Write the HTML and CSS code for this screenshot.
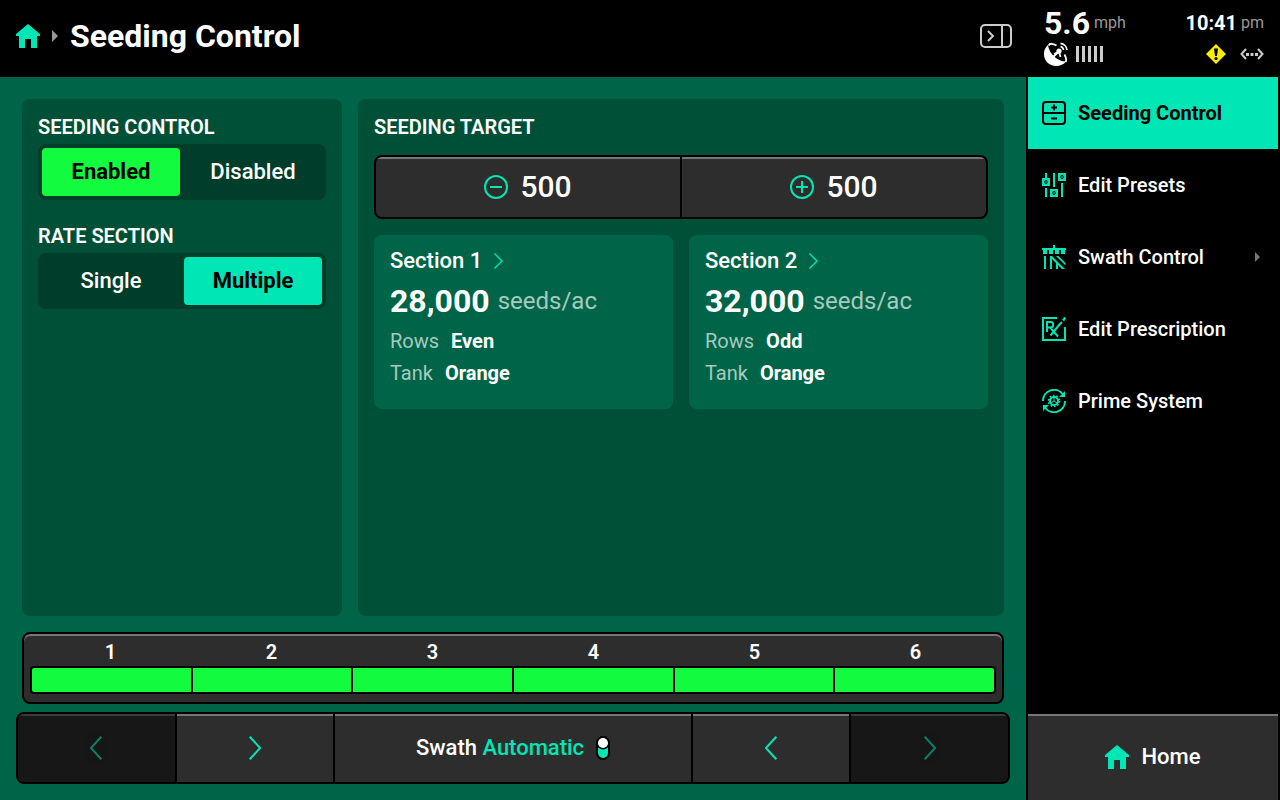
FILE: index.html
```html
<!DOCTYPE html>
<html lang="en">
<head>
    <meta charset="UTF-8">
    <meta name="viewport" content="width=device-width, initial-scale=1.0">
    <title>Seeding Control</title>
    <link rel="stylesheet" href="styles.css">
</head>
<body>
    <div class="app">
        <div class="page">
            <header class="header">
                <a href="#" class="home_link" aria-label="Home">
                    <svg class="icon" viewBox="0 0 24 24"><path fill="currentColor" d="M12 0 24 10v2h-3v12h-6v-9H9v9H3V12H0v-2z"/></svg>
                </a>
                <svg class="crumb_arrow" viewBox="0 0 6 12"><path fill="currentColor" d="M0 0 6 6 0 12z"/></svg>
                <h1>Seeding Control</h1>
                <button class="collapse_btn" type="button" aria-label="Collapse menu">
                    <svg viewBox="0 0 32 24" fill="none" stroke="currentColor" stroke-width="2">
                        <rect x="1" y="1" width="30" height="22" rx="4"/>
                        <path d="M22 1v22M8 7l5 5-5 5"/>
                    </svg>
                </button>
            </header>

            <main class="content">
                <div class="panels">
                    <section class="panel settings">
                        <fieldset>
                            <legend>SEEDING CONTROL</legend>
                            <div class="segment">
                                <label class="green"><input type="radio" name="seeding" checked><span>Enabled</span></label>
                                <label><input type="radio" name="seeding"><span>Disabled</span></label>
                            </div>
                        </fieldset>
                        <fieldset>
                            <legend>RATE SECTION</legend>
                            <div class="segment">
                                <label><input type="radio" name="rate"><span>Single</span></label>
                                <label><input type="radio" name="rate" checked><span>Multiple</span></label>
                            </div>
                        </fieldset>
                    </section>

                    <section class="panel target">
                        <h2>SEEDING TARGET</h2>
                        <div class="stepper">
                            <button type="button">
                                <svg class="icon" viewBox="0 0 24 24" fill="none" stroke="currentColor" stroke-width="2"><circle cx="12" cy="12" r="11"/><path d="M6 12h12"/></svg>
                                <span>500</span>
                            </button>
                            <button type="button">
                                <svg class="icon" viewBox="0 0 24 24" fill="none" stroke="currentColor" stroke-width="2"><circle cx="12" cy="12" r="11"/><path d="M6 12h12M12 6v12"/></svg>
                                <span>500</span>
                            </button>
                        </div>
                        <div class="cards">
                            <article class="card">
                                <a href="#" class="card_title">Section 1
                                    <svg viewBox="0 0 9 16" fill="none" stroke="currentColor" stroke-width="1.4"><path d="M.5.5 8 8 .5 15.5"/></svg>
                                </a>
                                <p class="rate"><strong>28,000</strong> seeds/ac</p>
                                <dl>
                                    <div><dt>Rows</dt><dd>Even</dd></div>
                                    <div><dt>Tank</dt><dd>Orange</dd></div>
                                </dl>
                            </article>
                            <article class="card">
                                <a href="#" class="card_title">Section 2
                                    <svg viewBox="0 0 9 16" fill="none" stroke="currentColor" stroke-width="1.4"><path d="M.5.5 8 8 .5 15.5"/></svg>
                                </a>
                                <p class="rate"><strong>32,000</strong> seeds/ac</p>
                                <dl>
                                    <div><dt>Rows</dt><dd>Odd</dd></div>
                                    <div><dt>Tank</dt><dd>Orange</dd></div>
                                </dl>
                            </article>
                        </div>
                    </section>
                </div>

                <div class="swaths">
                    <div class="swath_labels">
                        <span>1</span><span>2</span><span>3</span><span>4</span><span>5</span><span>6</span>
                    </div>
                    <div class="swath_bar">
                        <i></i><i></i><i></i><i></i><i></i><i></i>
                    </div>
                </div>

                <div class="swath_nav">
                    <button type="button" disabled aria-label="Left edge out"><svg viewBox="0 0 12 24"><path d="M11.3.7.9 12l10.4 11.3"/></svg></button>
                    <button type="button" aria-label="Left edge in"><svg viewBox="0 0 12 24"><path d="M.7.7 11.1 12 .7 23.3"/></svg></button>
                    <button type="button" class="swath_mode">
                        <span>Swath <em>Automatic</em></span>
                        <svg class="switch" viewBox="0 0 14 24">
                            <rect width="14" height="24" rx="7" fill="#000"/>
                            <rect x="2" y="6" width="10" height="16" rx="5" fill="#00e6b4"/>
                            <circle cx="7" cy="7" r="6.5" fill="#000"/>
                            <circle cx="7" cy="7" r="5" fill="#fff"/>
                        </svg>
                    </button>
                    <button type="button" aria-label="Right edge in"><svg viewBox="0 0 12 24"><path d="M11.3.7.9 12l10.4 11.3"/></svg></button>
                    <button type="button" disabled aria-label="Right edge out"><svg viewBox="0 0 12 24"><path d="M.7.7 11.1 12 .7 23.3"/></svg></button>
                </div>
            </main>
        </div>

        <aside class="sidebar">
            <div class="status">
                <div class="status_row">
                    <div class="speed"><strong>5.6</strong><span>mph</span></div>
                    <div class="clock"><strong>10:41</strong><span>pm</span></div>
                </div>
                <div class="status_row icons">
                    <div class="gps">
                        <svg class="icon" viewBox="0 0 24 24" fill="none">
                            <path fill="#fff" d="M4 3A12 12 0 0 0 0 12.500C0 19 5.500 24 12 24c4.200 0 8-1.600 10-4.500C14 19.500 5 12 4 3z"/>
                            <path stroke="#fff" stroke-width="1.800" d="M4.500 3.500C6 1 9 1.400 12.500 3.500M21.500 20c1.500-2 .300-5-1-7.500M15 9.500l-5 2.500M15 9.500l1.500 5.500M15 9.500 8 16"/>
                            <circle cx="15" cy="9" r="2.600" fill="#fff"/>
                            <path stroke="#fff" stroke-width="1.700" d="M16.500 4.500a4 4 0 0 1 3 3.500M16.500 1.300A7.500 7.500 0 0 1 23 8"/>
                        </svg>
                        <svg class="signal" viewBox="0 0 28 16" fill="#ccc"><path d="M0 0h3v16H0zM6 0h3v16H6zM12 0h3v16h-3zM18 0h3v16h-3zM24 0h3v16h-3z"/></svg>
                    </div>
                    <div class="alerts">
                        <svg class="warning" viewBox="0 0 20 20"><path fill="#ffed00" d="M10 0 20 10 10 20 0 10z"/><path d="M8 4.500h4l-1 7.500H9z"/><circle cx="10" cy="14.500" r="1.600"/></svg>
                        <svg class="link_state" viewBox="0 0 24 12" fill="none" stroke="#ccc" stroke-width="2"><path d="M6 1 1.500 6 6 11M18 1l4.500 5L18 11"/><path fill="#ccc" stroke="none" d="M6 5h3v3H6zM10.500 5h3v3h-3zM15 5h3v3h-3z"/></svg>
                    </div>
                </div>
            </div>

            <nav class="menu">
                <a href="#" class="active">
                    <svg class="icon" viewBox="0 0 24 24" fill="none" stroke="currentColor" stroke-width="2"><rect x="1" y="1" width="22" height="22" rx="3"/><path d="M1 12h22M9 6.500h6M12 3.500v6M9 17.500h6"/></svg>
                    <span>Seeding Control</span>
                </a>
                <a href="#">
                    <svg class="icon" viewBox="0 0 24 24" fill="currentColor">
                        <path d="M3 0h2v5H3zM0 5h8v8H0zM3 15h2v9H3zM11 0h2v14h-2zM8 16h8v8H8zM16 0h8v8h-8zM19 10h2v14h-2z"/>
                        <g fill="none" stroke="#000" stroke-width="1"><ellipse cx="4" cy="9" rx="1.200" ry="1.800"/><ellipse cx="12" cy="20" rx="1.200" ry="1.800"/><ellipse cx="20" cy="4" rx="1.200" ry="1.800"/></g>
                    </svg>
                    <span>Edit Presets</span>
                </a>
                <a href="#">
                    <svg class="icon" viewBox="0 0 24 24" fill="currentColor">
                        <path d="M11 0h2v3h11v2h-1v4h-4V5h-2v4h-4V5h-2v4H7V5H5v4H1V5H0V3h11z"/>
                        <path d="M2 11h2v13H2zM8 11h2v13H8zM10 11l13 13h-3L10 14zM14 15.500l2 2V24h-2zM14 11h2.500l7 7v2.500z"/>
                    </svg>
                    <span>Swath Control</span>
                    <svg class="more" viewBox="0 0 5 10"><path fill="currentColor" d="M0 0 5 5 0 10z"/></svg>
                </a>
                <a href="#">
                    <svg class="icon" viewBox="0 0 24 24" fill="none" stroke="currentColor" stroke-width="2">
                        <path d="M15 1H1v22h22V10"/>
                        <path d="M5 15V5h3.500a2.700 2.700 0 0 1 0 5.400H5M8 10.400l8 9.100"/>
                        <path d="m8.500 18.500 9-11 2.500-2.500"/><path stroke-width="2.500" d="m21 3.500 2.500-3"/>
                    </svg>
                    <span>Edit Prescription</span>
                </a>
                <a href="#">
                    <svg class="icon" viewBox="0 0 24 24" fill="none" stroke="currentColor" stroke-width="2">
                        <path d="M1 12A11 11 0 0 1 21 5.500M23 12A11 11 0 0 1 3 18.500"/>
                        <path fill="currentColor" stroke="none" d="M23 2v6h-6zM1 22v-6h6z"/>
                        <circle cx="12" cy="12" r="4"/>
                        <circle cx="12" cy="12" r="5.400" stroke-width="1.800" stroke-dasharray="1.600 1.793"/>
                        <path stroke-width="1" d="M12 12V8.500M12 12l3 2M12 12l-3 2"/>
                    </svg>
                    <span>Prime System</span>
                </a>
            </nav>

            <button class="home_btn" type="button">
                <svg class="icon" viewBox="0 0 24 24"><path fill="currentColor" d="M12 0 24 10v2h-3v12h-6v-9H9v9H3V12H0v-2z"/></svg>
                <span>Home</span>
            </button>
        </aside>
    </div>
</body>
</html>
```
FILE: styles.css
```css
*{
    box-sizing: border-box;
    margin: 0;
    padding: 0;
}
body{
    font-family: Roboto, "Liberation Sans", sans-serif;
    font-size: 20px;
    font-weight: 500;
    line-height: 24px;
    color: #fff;
    background-color: #000;
}
a{
    color: inherit;
    text-decoration: none;
}
button{
    font: inherit;
    color: inherit;
    border: 0;
    background: none;
    cursor: pointer;
}
svg{
    display: block;
    flex: none;
}
.icon{
    width: 24px;
    height: 24px;
    color: #00e6b4;
}

/* layout */
.app{
    display: grid;
    grid-template-columns: 1fr 254px;
    min-height: 100vh;
}
.page{
    display: flex;
    flex-direction: column;
}
.header{
    display: flex;
    align-items: center;
    height: 77px;
    padding: 0 14px 5px 16px;
}
.crumb_arrow{
    width: 6px;
    height: 12px;
    margin: 0 12px;
    color: #999;
}
.header h1{
    font-size: 32px;
    font-weight: 700;
    line-height: 40px;
}
.collapse_btn{
    margin-left: auto;
    color: #ccc;
}
.collapse_btn svg{
    width: 32px;
    height: 24px;
}
.content{
    flex: 1;
    display: flex;
    flex-direction: column;
    padding: 22px 16px 16px;
    background-color: #006548;
}

/* panels */
.panels{
    flex: 1;
    display: grid;
    grid-template-columns: 320px 1fr;
    gap: 16px;
    margin: 0 6px 16px;
}
.panel{
    padding: 16px;
    border-radius: 8px;
    background-color: #005038;
}
.panel h2,
legend{
    font-size: 20px;
    font-weight: 600;
    line-height: 24px;
}
fieldset{
    border: 0;
    margin-bottom: 24px;
}
.segment{
    display: flex;
    gap: 4px;
    margin-top: 5px;
    padding: 4px;
    border-radius: 8px;
    background-color: #003d2b;
}
.segment label{
    flex: 1;
    cursor: pointer;
}
.segment input{
    position: absolute;
    opacity: 0;
}
.segment span{
    display: block;
    border-radius: 4px;
    font-size: 22px;
    line-height: 48px;
    text-align: center;
}
.segment input:checked + span{
    color: #000;
    font-weight: 700;
    background-color: #00e6b4;
}
.segment .green input:checked + span{
    background-color: #12fb3e;
}

/* stepper and bottom buttons share the raised look */
.stepper,
.swath_nav{
    display: grid;
    gap: 2px;
    border: 2px solid #000;
    border-radius: 8px;
    overflow: hidden;
    background-color: #000;
}
.stepper{
    grid-template-columns: 1fr 1fr;
    margin: 16px 0;
}
.stepper button,
.swath_nav button,
.home_btn{
    display: flex;
    align-items: center;
    justify-content: center;
    gap: 12px;
    background-color: #2d2d2d;
    box-shadow: inset 0 2px #777;
}
.stepper button{
    height: 60px;
    font-size: 30px;
}

/* section cards */
.cards{
    display: grid;
    grid-template-columns: 1fr 1fr;
    gap: 16px;
}
.card{
    padding: 8px 16px 20px;
    border-radius: 8px;
    background-color: #006548;
}
.card_title{
    display: flex;
    align-items: center;
    gap: 12px;
    font-size: 22px;
    line-height: 36px;
}
.card_title svg{
    width: 9px;
    height: 16px;
    color: #00e6b4;
}
.rate{
    display: flex;
    align-items: center;
    gap: 8px;
    margin-bottom: 2px;
    font-size: 24px;
    font-weight: 400;
    line-height: 44px;
    color: #a6cabf;
}
.rate strong{
    font-size: 32px;
    font-weight: 700;
    color: #fff;
}
.card dl div{
    display: flex;
    gap: 12px;
    line-height: 32px;
}
.card dt{
    font-weight: 400;
    color: #a6cabf;
}
.card dd{
    font-weight: 700;
}

/* swath state */
.swaths{
    margin: 0 6px 8px;
    padding: 6px 6px 8px;
    border: 2px solid #000;
    border-radius: 8px;
    background-color: #2d2d2d;
    box-shadow: inset 0 2px #777;
}
.swath_labels,
.swath_bar{
    display: grid;
    grid-template-columns: repeat(6, 1fr);
}
.swath_labels{
    font-weight: 600;
    text-align: center;
    margin-bottom: 2px;
}
.swath_bar{
    gap: 2px;
    height: 28px;
    border: 2px solid #000;
    border-radius: 4px;
    overflow: hidden;
    background-color: #000;
}
.swath_bar i{
    background-color: #12fb3e;
}
.swath_nav{
    grid-template-columns: 11fr 11fr 25fr 11fr 11fr;
}
.swath_nav button{
    height: 68px;
    font-size: 22px;
}
.swath_nav svg{
    width: 12px;
    height: 24px;
    fill: none;
    stroke: #00e6b4;
    stroke-width: 2;
}
.swath_nav button:disabled{
    background-color: #171717;
    box-shadow: inset 0 2px #3b3b3b;
}
.swath_nav button:disabled svg{
    opacity: 0.5;
}
.swath_nav em{
    font-style: normal;
    color: #00e6b4;
}
.swath_nav .switch{
    width: 14px;
    stroke: none;
}

/* sidebar */
.sidebar{
    display: flex;
    flex-direction: column;
    padding: 0 2px;
}
.status{
    display: flex;
    flex-direction: column;
    gap: 4px;
    height: 77px;
    padding: 8px 14px 0 16px;
}
.status_row{
    display: flex;
    align-items: center;
    justify-content: space-between;
    line-height: 30px;
}
.status strong{
    font-weight: 700;
}
.status span{
    margin-left: 4px;
    font-size: 16px;
    font-weight: 400;
    color: #999;
}
.speed,
.clock{
    display: flex;
    align-items: center;
}
.speed strong{
    font-size: 32px;
}
.gps,
.alerts{
    display: flex;
    align-items: center;
    gap: 8px;
}
.alerts{
    gap: 14px;
}
.signal{
    width: 28px;
    height: 16px;
}
.warning{
    width: 20px;
    height: 20px;
}
.link_state{
    width: 24px;
    height: 12px;
}
.menu{
    flex: 1;
}
.menu a{
    display: flex;
    align-items: center;
    gap: 12px;
    height: 72px;
    padding: 0 18px 0 14px;
}
.menu .active{
    color: #000;
    font-weight: 700;
    background-color: #00e6b4;
}
.menu .active .icon{
    color: #000;
}
.more{
    width: 5px;
    height: 10px;
    margin-left: auto;
    color: #777;
}
.home_btn{
    height: 86px;
    font-size: 22px;
}
```
